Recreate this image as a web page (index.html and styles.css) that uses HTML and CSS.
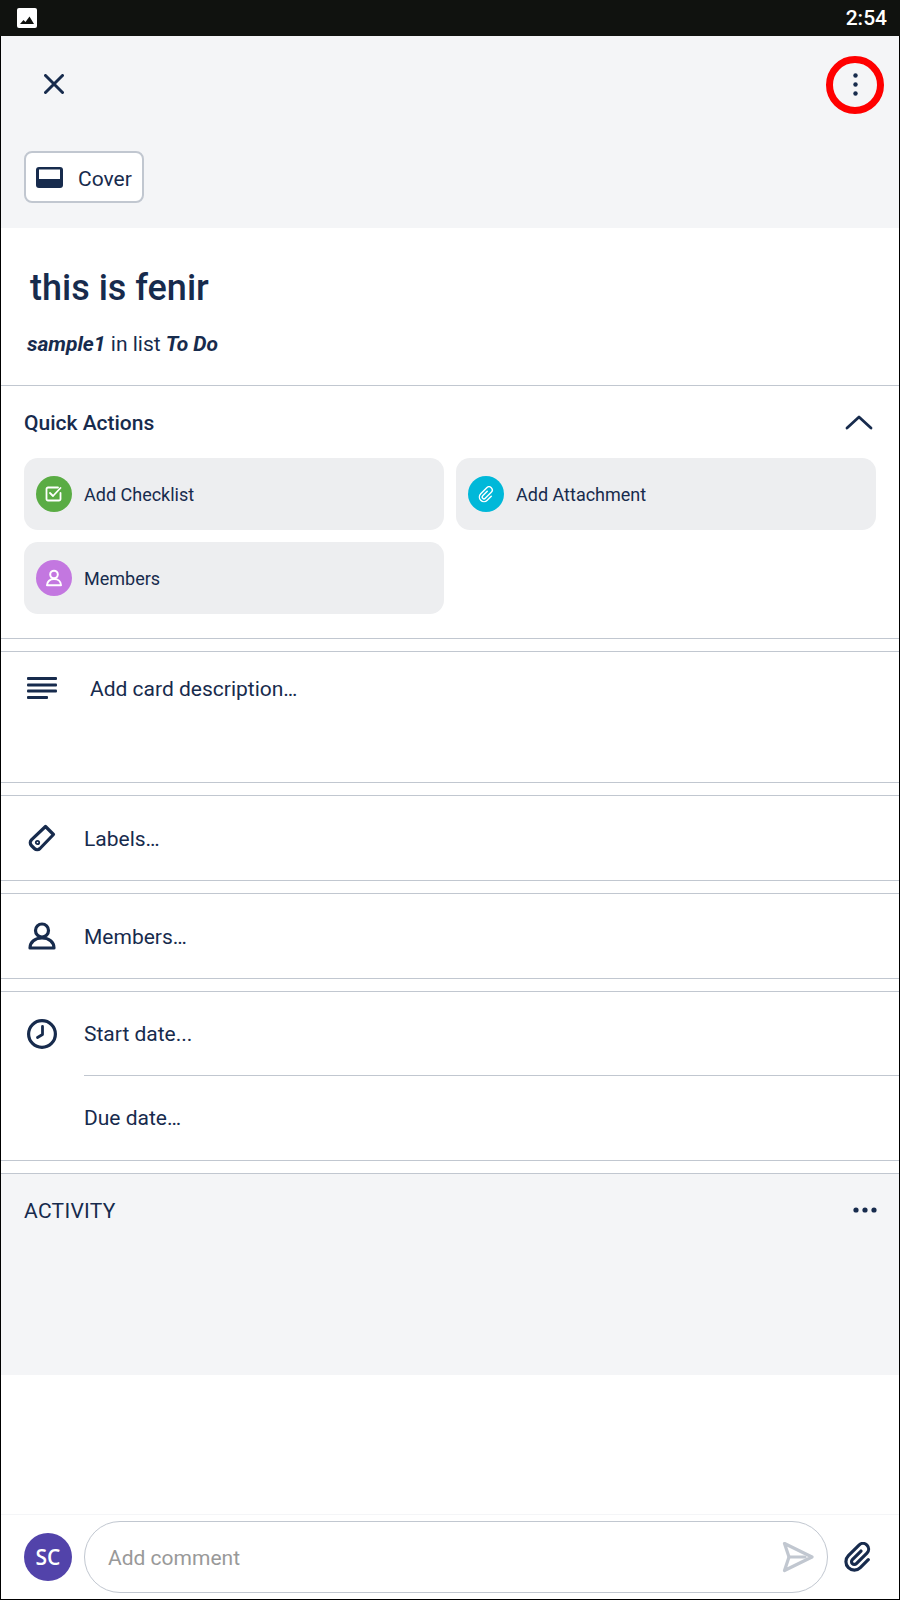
FILE: index.html
```html
<!DOCTYPE html>
<html lang="en">
<head>
    <meta charset="UTF-8">
    <meta name="viewport" content="width=device-width, initial-scale=1.0">
    <title>this is fenir</title>
    <link rel="stylesheet" href="styles.css">
</head>
<body>
    <div class="screen">
        <div class="status-bar">
            <svg width="20" height="20" viewBox="0 0 20 20">
                <rect width="20" height="20" rx="2" fill="#fff"/>
                <path d="M3 16l3.500-4 2 2 4-5.500 4.500 7.500z" fill="#10120f"/>
            </svg>
            <span class="status-time">2:54</span>
        </div>

        <div class="top">
            <div class="top-row">
                <svg width="20" height="20" viewBox="0 0 20 20" fill="none" stroke="#172b4d" stroke-width="3" stroke-linecap="round">
                    <path d="M1.500 1.500l17 17M18.500 1.500l-17 17"/>
                </svg>
                <svg class="more" width="5" height="23" viewBox="0 0 5 23" fill="#172b4d">
                    <circle cx="2.500" cy="2.500" r="2.200"/>
                    <circle cx="2.500" cy="11.500" r="2.200"/>
                    <circle cx="2.500" cy="20.500" r="2.200"/>
                </svg>
                <div class="ring"></div>
            </div>
            <div class="cover-btn">
                <svg width="27" height="21" viewBox="0 0 27 21">
                    <rect width="27" height="21" rx="3" fill="#172b4d"/>
                    <rect x="3" y="2.500" width="21" height="9.500" fill="#fff"/>
                </svg>
                <span>Cover</span>
            </div>
        </div>

        <div class="title-block">
            <h1 class="card-title">this is fenir</h1>
            <p class="card-sub"><b>sample1</b> in list <b>To Do</b></p>
        </div>

        <div class="section quick">
            <div class="quick-head">
                <span class="quick-title">Quick Actions</span>
                <svg width="28" height="15" viewBox="0 0 28 15" fill="none" stroke="#172b4d" stroke-width="2.800" stroke-linecap="round" stroke-linejoin="round">
                    <path d="M2 13L14 2l12 11"/>
                </svg>
            </div>
            <div class="quick-grid">
                <div class="quick-btn">
                    <span class="dot green">
                        <svg width="18" height="18" viewBox="0 0 18 18" fill="none" stroke="#fff" stroke-width="1.800" stroke-linecap="round" stroke-linejoin="round">
                            <path d="M15.500 8v6a1.500 1.500 0 0 1-1.500 1.500H3A1.500 1.500 0 0 1 1.500 14V4A1.500 1.500 0 0 1 3 2.500h10"/>
                            <path d="M5 8l3 3 7.500-8"/>
                        </svg>
                    </span>
                    Add Checklist
                </div>
                <div class="quick-btn">
                    <span class="dot teal">
                        <svg width="17" height="17" viewBox="-12 -12 24 24" fill="none" stroke="#fff" stroke-width="2" stroke-linecap="round" stroke-linejoin="round">
                            <path transform="rotate(45)" d="M-2.500-4V5a2.500 2.500 0 0 0 5 0V-7a4.500 4.500 0 0 0-9 0V5a6.500 6.500 0 0 0 13 0V-3"/>
                        </svg>
                    </span>
                    Add Attachment
                </div>
                <div class="quick-btn">
                    <span class="dot purple">
                        <svg width="18" height="18" viewBox="0 0 18 18" fill="none" stroke="#fff" stroke-width="2" stroke-linejoin="round">
                            <circle cx="9" cy="5.500" r="3.800"/>
                            <path d="M2 16.200c0-3.800 3-6.200 7-6.200s7 2.400 7 6.200z"/>
                        </svg>
                    </span>
                    Members
                </div>
            </div>
        </div>

        <div class="section desc">
            <svg width="30" height="22" viewBox="0 0 30 22" fill="#172b4d">
                <rect y="0" width="30" height="3" rx="1"/>
                <rect y="6.500" width="30" height="3" rx="1"/>
                <rect y="12.500" width="30" height="3" rx="1"/>
                <rect y="19" width="21" height="3" rx="1"/>
            </svg>
            <span>Add card description…</span>
        </div>

        <div class="section row">
            <svg width="30" height="30" viewBox="0 0 30 30" fill="none" stroke="#172b4d" stroke-width="3.200" stroke-linejoin="round">
                <path d="M18.500 3.500l8 8L13 25.500a4 4 0 0 1-5.600 0l-3-3a4 4 0 0 1 0-5.600z"/>
                <circle cx="10.500" cy="19.500" r="1.700" stroke-width="1.800"/>
            </svg>
            <span>Labels…</span>
        </div>

        <div class="section row">
            <svg width="30" height="30" viewBox="0 0 30 30" fill="none" stroke="#172b4d" stroke-width="3.200" stroke-linejoin="round">
                <circle cx="15" cy="9.500" r="6.500"/>
                <path d="M3 27c0-6 5-10 12-10s12 4 12 10z"/>
            </svg>
            <span>Members…</span>
        </div>

        <div class="section dates">
            <div class="date-row start">
                <svg width="30" height="30" viewBox="0 0 30 30" fill="none" stroke="#172b4d" stroke-width="3.200" stroke-linecap="round" stroke-linejoin="round">
                    <circle cx="15" cy="15" r="13.400"/>
                    <path d="M15.500 7.500v8l-5 3" stroke-width="2.800"/>
                </svg>
                <span>Start date...</span>
            </div>
            <div class="date-row due">
                <span>Due date…</span>
            </div>
        </div>

        <div class="activity">
            <span>ACTIVITY</span>
            <svg width="24" height="6" viewBox="0 0 24 6" fill="#172b4d">
                <circle cx="3" cy="3" r="2.600"/>
                <circle cx="12" cy="3" r="2.600"/>
                <circle cx="21" cy="3" r="2.600"/>
            </svg>
        </div>

        <div class="spacer"></div>

        <div class="comment-bar">
            <div class="avatar">SC</div>
            <div class="comment-input">
                <span>Add comment</span>
                <svg width="32" height="32" viewBox="0 0 32 32" fill="none" stroke="#c1c7d0" stroke-width="3.200" stroke-linecap="round" stroke-linejoin="round">
                    <path d="M2.500 2.500L30 16 2.500 29.500 7 16z"/>
                    <path d="M7 16h16"/>
                </svg>
            </div>
            <svg width="30" height="30" viewBox="-16 -16 32 32" fill="none" stroke="#172b4d" stroke-width="3.400" stroke-linecap="round" stroke-linejoin="round">
                <path transform="rotate(45)" d="M-3-6V7a3 3 0 0 0 6 0V-9a6 6 0 0 0-12 0V7a9 9 0 0 0 18 0V-5"/>
            </svg>
        </div>
    </div>
</body>
</html>
```

FILE: styles.css
```css
*{
    box-sizing: border-box;
}
body{
    margin: 0;
    font-family: Roboto, 'Liberation Sans', sans-serif;
    color: #172b4d;
}
.screen{
    width: 900px;
    height: 1600px;
    display: flex;
    flex-direction: column;
    background: #fff;
    border-left: 1px solid #000;
    border-right: 1px solid #000;
    border-bottom: 1px solid #000;
}
.status-bar{
    height: 36px;
    flex: none;
    margin: 0 -1px;
    padding: 0 13px 0 17px;
    display: flex;
    justify-content: space-between;
    align-items: center;
    background: #10120f;
}
.status-time{
    color: #fff;
    font-size: 21px;
    font-weight: 500;
}
.top{
    height: 192px;
    flex: none;
    padding: 38px 0 0 23px;
    background: #f4f5f7;
}
.top-row{
    position: relative;
    height: 77px;
    padding: 0 41px 0 20px;
    display: flex;
    justify-content: space-between;
}
.more{
    margin-top: -1px;
}
.ring{
    position: absolute;
    top: -18px;
    right: 15px;
    width: 58px;
    height: 58px;
    border: 7px solid #f00;
    border-radius: 50%;
}
.cover-btn{
    width: 120px;
    height: 52px;
    display: flex;
    align-items: center;
    gap: 15px;
    padding-left: 10px;
    font-size: 21px;
    background: #fff;
    border: 2px solid #c1c7d0;
    border-radius: 8px;
}
.cover-btn span{
    padding-top: 3px;
}
.title-block{
    height: 157px;
    flex: none;
    padding: 38px 0 0 26px;
}
.card-title{
    margin: 0 0 0 3px;
    font-size: 36px;
    font-weight: 500;
    line-height: 44px;
}
.card-sub{
    margin: 20px 0 0;
    font-size: 21px;
    line-height: 28px;
}
.card-sub b{
    font-style: italic;
    font-weight: 700;
}
.section{
    flex: none;
    border-top: 1px solid #c1c7d0;
    border-bottom: 1px solid #c1c7d0;
    background: #fff;
    font-size: 21px;
}
.quick{
    height: 254px;
    margin-bottom: 12px;
    padding: 0 23px;
}
.quick-head{
    height: 72px;
    display: flex;
    justify-content: space-between;
    align-items: center;
    padding-right: 3px;
}
.quick-title{
    padding-top: 1px;
    font-size: 21px;
    font-weight: 500;
}
.quick-grid{
    display: grid;
    grid-template-columns: 420px 420px;
    gap: 12px;
}
.quick-btn{
    height: 72px;
    padding-left: 12px;
    display: flex;
    align-items: center;
    gap: 12px;
    font-size: 18px;
    background: #edeef0;
    border-radius: 14px;
}
.dot{
    width: 36px;
    height: 36px;
    display: flex;
    justify-content: center;
    align-items: center;
    border-radius: 50%;
}
.green{
    background: #5aac44;
}
.teal{
    background: #00b8d9;
}
.purple{
    background: #c377e0;
}
.desc{
    height: 132px;
    margin-bottom: 12px;
    padding: 25px 0 0 26px;
    display: flex;
    align-items: flex-start;
    gap: 33px;
}
.desc span{
    line-height: 24px;
}
.row{
    height: 86px;
    margin-bottom: 12px;
    padding-left: 26px;
    display: flex;
    align-items: center;
    gap: 27px;
}
.row span{
    padding-top: 2px;
}
.dates{
    height: 170px;
    margin-bottom: 12px;
    padding-left: 26px;
}
.date-row{
    height: 84px;
    display: flex;
    align-items: center;
    gap: 27px;
}
.start{
    height: 83px;
}
.due{
    margin-left: 57px;
    border-top: 1px solid #c1c7d0;
}
.activity{
    height: 202px;
    flex: none;
    padding: 24px 22px 0 23px;
    display: flex;
    justify-content: space-between;
    align-items: flex-start;
    font-size: 21px;
    letter-spacing: 0.3px;
    line-height: 26px;
    background: #f4f5f7;
    border-top: 1px solid #c1c7d0;
}
.activity svg{
    margin-top: 9px;
}
.spacer{
    flex: 1;
}
.comment-bar{
    height: 85px;
    flex: none;
    padding: 6px 0 0 23px;
    display: flex;
    align-items: flex-start;
    border-top: 1px solid #f4f5f7;
}
.avatar{
    width: 48px;
    height: 48px;
    margin: 12px 12px 0 0;
    display: flex;
    justify-content: center;
    align-items: center;
    flex: none;
    color: #fff;
    font-family: 'Open Sans', sans-serif;
    font-size: 21px;
    font-weight: 600;
    background: #5243aa;
    border-radius: 50%;
}
.comment-input{
    width: 744px;
    height: 72px;
    margin-right: 16px;
    padding: 0 13px 0 23px;
    display: flex;
    justify-content: space-between;
    align-items: center;
    flex: none;
    font-size: 21px;
    border: 1px solid #c1c7d0;
    border-radius: 36px;
}
.comment-input span{
    padding-top: 2px;
    color: #999;
}
.comment-bar > svg{
    margin-top: 21px;
}
```
